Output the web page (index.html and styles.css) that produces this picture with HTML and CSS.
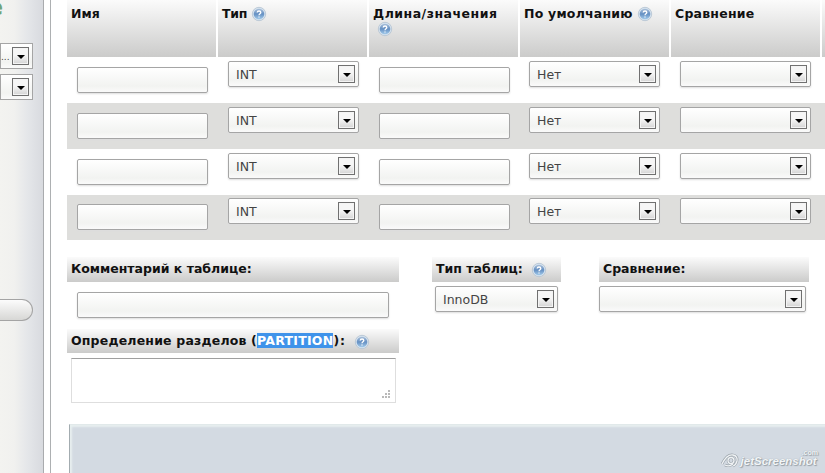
FILE: index.html
```html
<!DOCTYPE html>
<html lang="ru">
<head>
<meta charset="utf-8">
<title>Создание таблицы</title>
<link rel="stylesheet" href="styles.css">
</head>
<body>
<svg width="0" height="0" class="defs">
  <defs>
    <linearGradient id="ball" x1="0" y1="0" x2="0" y2="1"><stop offset="0" stop-color="#a9bfd9"/><stop offset=".5" stop-color="#6590c3"/><stop offset="1" stop-color="#a3cbeb"/></linearGradient>
    <symbol id="help" viewBox="0 0 16 16">
      <circle cx="8" cy="8" r="6.700" fill="#d5e2ee" stroke="#b3c2d0" stroke-width=".8"/>
      <circle cx="8" cy="8" r="5.300" fill="url(#ball)"/>
      <path d="M6.200 6.500C6.300 4.500 9.800 4.500 9.800 6.500C9.800 7.800 8 7.800 8 9.300M8 10.400V11.600" fill="none" stroke="#fff" stroke-width="1.300"/>
    </symbol>
  </defs>
</svg>
<div class="page">
  <aside class="sidebar">
    <div class="logo">e</div>
    <div class="select side"><span>...</span><i></i></div>
    <div class="select side second"><span></span><i></i></div>
    <div class="pill"></div>
  </aside>
  <main>
    <div class="row head">
      <div><b>Имя</b></div>
      <div><b class="type">Тип</b> <svg class="help"><use href="#help"/></svg></div>
      <div><b class="length">Длина/значения</b><svg class="help below"><use href="#help"/></svg></div>
      <div><b class="default">По умолчанию</b> <svg class="help"><use href="#help"/></svg></div>
      <div><b class="default">Сравнение</b></div>
      <div></div>
    </div>
    <div class="row"><div class="input"></div><div class="select"><span>INT</span><i></i></div><div class="input"></div><div class="select"><span>Нет</span><i></i></div><div class="select"><span></span><i></i></div></div>
    <div class="row odd"><div class="input"></div><div class="select"><span>INT</span><i></i></div><div class="input"></div><div class="select"><span>Нет</span><i></i></div><div class="select"><span></span><i></i></div></div>
    <div class="row"><div class="input"></div><div class="select"><span>INT</span><i></i></div><div class="input"></div><div class="select"><span>Нет</span><i></i></div><div class="select"><span></span><i></i></div></div>
    <div class="row odd last"><div class="input"></div><div class="select"><span>INT</span><i></i></div><div class="input"></div><div class="select"><span>Нет</span><i></i></div><div class="select"><span></span><i></i></div></div>
    <div class="options">
      <section class="comment">
        <h3><b>Комментарий к таблице:</b></h3>
        <div class="input"></div>
        <h3 class="part"><b>Определение разделов (<mark>PARTITION</mark><span class="close">):</span></b><svg class="help"><use href="#help"/></svg></h3>
        <div class="textarea"><svg width="9" height="9" fill="#b9b9b9"><path d="M6 0h2v2h-2zM3 3h2v2h-2zM6 3h2v2h-2zM0 6h2v2h-2zM3 6h2v2h-2zM6 6h2v2h-2z"/></svg></div>
      </section>
      <section class="engine">
        <h3><b>Тип таблиц:</b><svg class="help"><use href="#help"/></svg></h3>
        <div class="select"><span>InnoDB</span><i></i></div>
      </section>
      <section class="collation">
        <h3><b>Сравнение:</b></h3>
        <div class="select"><span></span><i></i></div>
      </section>
    </div>
    <footer>
      <div class="mark">
        <svg width="20" height="15" viewBox="0 0 20 15" fill="none"><g stroke="#9aa3aa" stroke-width="2.600"><path d="M1 11Q6 1 12 2Q17 3 16 8Q15 12 12 13M4 12Q8 14 12 11"/><circle cx="10" cy="7.500" r="3"/></g><g stroke="#f0f3f5" stroke-width="1.300"><path d="M1 11Q6 1 12 2Q17 3 16 8Q15 12 12 13M4 12Q8 14 12 11"/><circle cx="10" cy="7.500" r="3"/></g></svg>
        <span class="name">jetScreenshot</span><span class="com">.com</span>
      </div>
    </footer>
  </main>
</div>
</body>
</html>
```

FILE: styles.css
```css
* { box-sizing: border-box; }
body { margin: 0; width: 825px; height: 473px; overflow: hidden; background: #fff; color: #111; font: 12.5px "DejaVu Sans", sans-serif; }
.defs { position: absolute; }
.page { display: flex; height: 473px; }
.sidebar { width: 44px; flex: none; border-right: 1px solid #a9abae; background: linear-gradient(90deg, #f3f3f0 0, #f1f1ef 14px, #e4e6e9 28px, #d8dadf 43px); overflow: hidden; }
.logo { height: 43px; width: 3px; display: flex; justify-content: flex-end; font: bold 23px/15px "DejaVu Sans", sans-serif; color: #6fa37a; }
.input, .select { height: 26px; border: 1px solid #a5a5a5; border-radius: 2px; background: linear-gradient(#fff, #f2f3f1 75%, #fafafa); box-shadow: 0 1px 2px #ddd; }
.select { display: flex; justify-content: space-between; padding: 3px 3px 3px 7px; color: #444; line-height: 19px; }
.select span { font-size: 12.5px; }
.select i { flex: none; width: 17px; height: 18px; border: 1px solid #707070; background: linear-gradient(#f6f6f6 45%, #d4d4d4); display: flex; align-items: center; justify-content: center; box-shadow: inset 0 0 0 1px #f4f4f4; }
.select i::after { content: ""; border: 4px solid transparent; border-top-color: #000; border-bottom: 0; margin-top: 2px; }
.select.side { width: 33px; border-radius: 0; padding-left: 0; box-shadow: none; line-height: 21px; }
.side span { font-size: 9px; }
.second { margin-top: 5px; }
.pill { margin-top: 199px; width: 33px; height: 22px; border: 1px solid #a4a4a4; border-left: 0; border-radius: 0 11px 11px 0; background: linear-gradient(#fcfcfc, #d7d7d5); }
main { margin-left: 6px; flex: none; width: 775px; border-left: 1px solid #adb0b2; padding-left: 16px; height: 473px; overflow: hidden; display: flex; flex-direction: column; }
.row { flex: none; display: grid; grid-template-columns: repeat(6, 149px); column-gap: 2px; height: 46px; align-items: start; padding-top: 4px; }
.row .input, .row .select { margin-left: 10px; width: 131px; }
.row .select:nth-child(n+4) { margin-left: 9px; }
.row .input { margin-top: 6px; }
.odd { background: #dededc; }
.last { height: 45px; padding-top: 3px; }
.head { height: 57px; padding: 0; }
.head > div { height: 57px; padding: 5px 0 0 4px; background: linear-gradient(#fbfbfb, #cbcbca); white-space: nowrap; line-height: 18px; font-size: 0; }
b { font-size: 12.5px; display: inline-block; vertical-align: top; }
.length { letter-spacing: .5px; }
.default { letter-spacing: .22px; }
.type { letter-spacing: -.3px; }
.help { width: 16px; height: 16px; flex: none; margin: 1px 0 0 4px; vertical-align: top; }
.below { display: block; margin: -2px 0 0 4px; }
.options { flex: none; height: 184px; display: flex; padding-top: 17px; }
h3 { margin: 0; height: 25px; padding: 2px 0 0 4px; line-height: 19px; font-size: 12.5px; white-space: nowrap; display: flex; background: linear-gradient(#fbfbfb, #cbcbca); }
h3 .help { margin: 3px 0 0 8px; }
.comment { width: 332px; }
.comment .input { margin: 10px 10px 11px; width: 312px; }
.part { height: 24px; letter-spacing: .18px; }
mark { background: #3f93ea; color: #fff; letter-spacing: .25px; }
.close { letter-spacing: .8px; }
.textarea { margin: 5px 0 0 4px; width: 325px; height: 45px; border: 1px solid #dedede; border-top-color: #9f9f9f; display: flex; align-items: flex-end; justify-content: flex-end; padding: 0 4px 3px; }
.engine { margin-left: 33px; width: 129px; }
.engine .select { margin: 4px 3px 0 3px; }
.collation { margin-left: 38px; width: 210px; }
.collation .select { margin: 4px 4px 0 0; width: 207px; }
footer { flex: none; margin-left: 2px; height: 49px; border-left: 1px solid #a3acb0; border-top: 1px solid #e1e9ea; box-shadow: inset 2px 2px 2px #e7efef; background: #d3dae2; display: flex; justify-content: flex-end; align-items: flex-end; padding: 0 7px 5px 0; }
.mark { display: flex; align-items: flex-end; color: #f2f5f7; text-shadow: 0 0 1px #8e979e, 1px 1px 1px #98a1a8; font: italic bold 11.5px/13px "Liberation Sans", sans-serif; }
.com { font: bold 7px/7px "Liberation Sans", sans-serif; align-self: flex-start; margin-left: -15px; margin-top: -4px; }
```
